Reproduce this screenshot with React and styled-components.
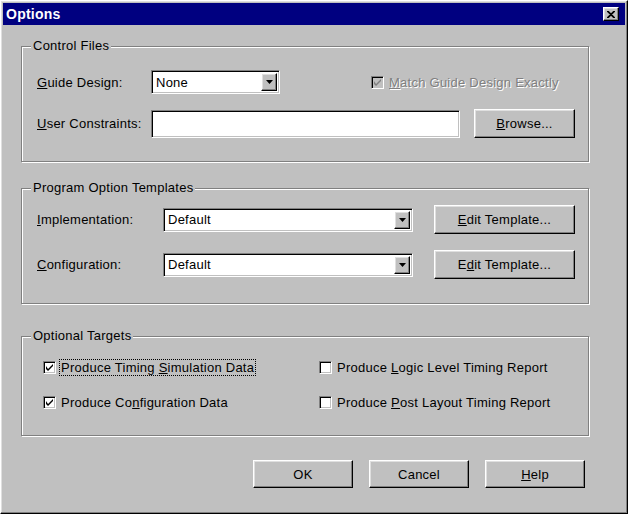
import styled, { createGlobalStyle } from "styled-components"

const Global = createGlobalStyle`
  html, body { margin: 0; padding: 0; background: #c0c0c0; }
  body { font-family: "Liberation Sans", Arial, sans-serif; font-size: 13px; letter-spacing: 0.25px; color: #000; }
`

const sunken = `
  border: 1px solid;
  border-color: #808080 #fff #fff #808080;
  box-shadow: inset 1px 1px #000, inset -1px -1px #c0c0c0;
`
const raised = `
  border: 1px solid;
  border-color: #fff #000 #000 #fff;
  box-shadow: inset -1px -1px #808080, inset 1px 1px #dfdfdf;
`

const Window = styled.div`
  width: 628px;
  height: 514px;
  box-sizing: border-box;
  background: #c0c0c0;
  ${raised}
  padding: 2px;
  display: flex;
  flex-direction: column;
`

const TitleBar = styled.div`
  height: 22px;
  background: #000080;
  color: #fff;
  font-weight: bold;
  font-size: 14px;
  display: flex;
  align-items: center;
  justify-content: space-between;
  padding: 0 6px 0 3px;
`

const CloseBtn = styled.div`
  width: 16px;
  height: 14px;
  box-sizing: border-box;
  background: #c0c0c0;
  ${raised}
  display: flex;
  align-items: center;
  justify-content: center;
`

const Body = styled.div`
  padding: 21px 40px 0 18px;
  display: flex;
  flex-direction: column;
`

const Group = styled.div`
  position: relative;
  height: ${({ h }) => h}px;
  margin-top: ${({ mt }) => mt || 0}px;
  margin-right: -4px;
  box-sizing: border-box;
  border: 1px solid #808080;
  box-shadow: inset 1px 1px #fff, 1px 1px #fff;
  padding: ${({ pt }) => pt}px 13px 0 15px;
  display: flex;
  flex-direction: column;
  gap: ${({ gap }) => gap}px;
`

const Legend = styled.span`
  position: absolute;
  top: -9px;
  left: 9px;
  background: #c0c0c0;
  padding: 0 2px;
`

const Row = styled.div`
  display: flex;
  align-items: center;
  height: ${({ h }) => h}px;
`

const Label = styled.span`
  width: ${({ w }) => w}px;
  flex: none;
  color: ${({ disabled }) => (disabled ? "#808080" : "#000")};
  text-shadow: ${({ disabled }) => (disabled ? "1px 1px #fff" : "none")};
`

const U = styled.span`text-decoration: underline;`

const Combo = styled.div`
  width: ${({ w }) => w}px;
  height: 24px;
  box-sizing: border-box;
  background: #fff;
  ${sunken}
  display: flex;
  align-items: center;
  padding: 2px 2px 2px 4px;
`

const ComboText = styled.span`flex: 1;`

const DropBtn = styled.div`
  width: 16px;
  height: 18px;
  box-sizing: border-box;
  background: #c0c0c0;
  ${raised}
  display: flex;
  align-items: center;
  justify-content: center;
`

const Input = styled.div`
  width: ${({ w }) => w}px;
  height: 28px;
  box-sizing: border-box;
  background: #fff;
  ${sunken}
`

const Button = styled.div`
  width: ${({ w }) => w}px;
  height: ${({ h }) => h || 29}px;
  box-sizing: border-box;
  background: #c0c0c0;
  ${raised}
  display: flex;
  align-items: center;
  justify-content: center;
  margin-left: ${({ ml }) => ml || 0}px;
  flex: none;
`

const Check = styled.div`
  width: 13px;
  height: 13px;
  box-sizing: border-box;
  background: ${({ disabled }) => (disabled ? "#c0c0c0" : "#fff")};
  ${sunken}
  display: flex;
  align-items: center;
  justify-content: center;
  flex: none;
  margin-right: 5px;
`

const CheckItem = styled.div`
  display: flex;
  align-items: center;
  margin-left: ${({ ml }) => ml || 0}px;
`

const Focus = styled.span`
  outline: 1px dotted #000;
  padding: 0 1px;
  margin-left: -1px;
`

const Targets = styled.div`
  display: grid;
  grid-template-columns: 276px auto;
  row-gap: 20px;
  padding-left: 6px;
`

const Footer = styled.div`
  display: flex;
  justify-content: flex-end;
  gap: 16px;
  margin-top: 24px;
`

const Arrow = () => (
  <svg width="7" height="4" viewBox="0 0 7 4"><path d="M0 0h7L3.5 4z" fill="#000" /></svg>
)

const Tick = ({ color = "#000" }) => (
  <svg width="7" height="7" viewBox="0 0 7 7">
    <path d="M0 2v3l2 2 5-5V0L2 5z" fill={color} />
  </svg>
)

const CheckBox = ({ checked, disabled }) => (
  <Check disabled={disabled}>{checked && <Tick color={disabled ? "#808080" : "#000"} />}</Check>
)

export default function App() {
  return (
    <>
      <Global />
      <Window>
        <TitleBar>
          <span>Options</span>
          <CloseBtn>
            <svg width="8" height="7" viewBox="0 0 8 7">
              <path d="M0 0L7 7M1 0L8 7M7 0L0 7M8 0L1 7" stroke="#000" strokeWidth="1.1" />
            </svg>
          </CloseBtn>
        </TitleBar>
        <Body>
          <Group h={116} pt={23} gap={15}>
            <Legend>Control Files</Legend>
            <Row h={24}>
              <Label w={114}><U>G</U>uide Design:</Label>
              <Combo w={129}><ComboText>None</ComboText><DropBtn><Arrow /></DropBtn></Combo>
              <CheckItem ml={91}>
                <CheckBox checked disabled />
                <Label disabled><U>M</U>atch Guide Design Exactly</Label>
              </CheckItem>
            </Row>
            <Row h={29}>
              <Label w={114}><U>U</U>ser Constraints:</Label>
              <Input w={309} />
              <Button w={101} ml={14}><span><U>B</U>rowse...</span></Button>
            </Row>
          </Group>

          <Group h={116} mt={26} pt={16} gap={16}>
            <Legend>Program Option Templates</Legend>
            <Row h={29}>
              <Label w={126}><U>I</U>mplementation:</Label>
              <Combo w={250}><ComboText>Default</ComboText><DropBtn><Arrow /></DropBtn></Combo>
              <Button w={141} ml={21}><span><U>E</U>dit Template...</span></Button>
            </Row>
            <Row h={29}>
              <Label w={126}><U>C</U>onfiguration:</Label>
              <Combo w={250}><ComboText>Default</ComboText><DropBtn><Arrow /></DropBtn></Combo>
              <Button w={141} ml={21}><span>E<U>d</U>it Template...</span></Button>
            </Row>
          </Group>

          <Group h={100} mt={32} pt={23} gap={0}>
            <Legend>Optional Targets</Legend>
            <Targets>
              <CheckItem><CheckBox checked /><Focus>Produce Timing <U>S</U>imulation Data</Focus></CheckItem>
              <CheckItem><CheckBox /><span>Produce <U>L</U>ogic Level Timing Report</span></CheckItem>
              <CheckItem><CheckBox checked /><span>Produce Co<U>n</U>figuration Data</span></CheckItem>
              <CheckItem><CheckBox /><span>Produce <U>P</U>ost Layout Timing Report</span></CheckItem>
            </Targets>
          </Group>

          <Footer>
            <Button w={100} h={28}>OK</Button>
            <Button w={100} h={28}>Cancel</Button>
            <Button w={100} h={28}><span><U>H</U>elp</span></Button>
          </Footer>
        </Body>
      </Window>
    </>
  )
}
